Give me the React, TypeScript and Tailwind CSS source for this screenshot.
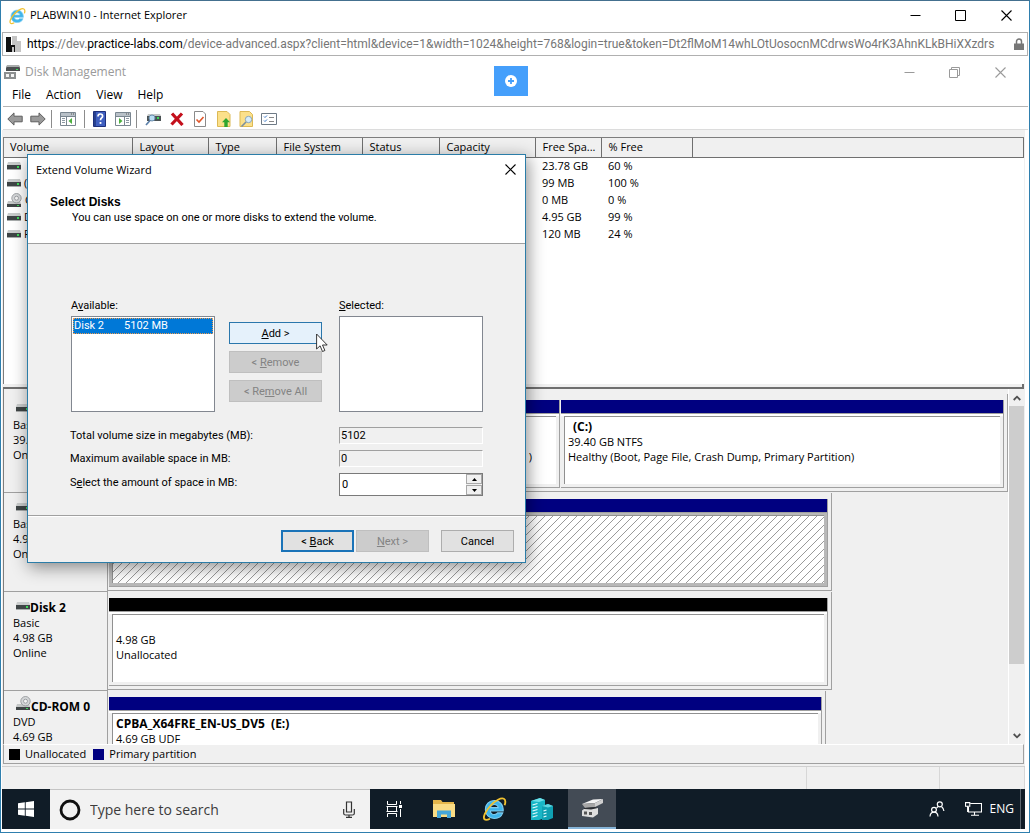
import type { ReactNode } from "react";

const ui = "font-['Open_Sans','Noto_Sans',sans-serif]";
const dlg = "font-['Roboto','Liberation_Sans',sans-serif]";

function IeIcon({ className }: { className: string }) {
  return (
    <svg viewBox="0 0 24 24" className={className} aria-hidden="true">
      <path
        d="M20.5 13.8H8.6c.2 2 1.6 3.3 3.7 3.3 1.4 0 2.4-.5 3-1.5h4.8c-1.2 3.3-4 5.1-7.8 5.1-4.9 0-8.3-3.300-8.300-8.200 0-4.900 3.400-8.300 8.300-8.300 5 0 8.400 3.600 8.200 9.600zM8.700 10.700h7.200c-.3-1.800-1.700-2.900-3.600-2.900-1.900 0-3.200 1.100-3.600 2.900z"
        fill="#3fb4ea"
        stroke="#7fcdf2"
        strokeWidth="1"
      />
      <path
        d="M21.800 8.500c1-2.800.9-5-.7-5.900-2.400-1.300-7.900 1.500-12.400 6.400C4 14.100 1.500 19.700 3.300 21.500c1 .9 2.800.6 5-.5"
        fill="none"
        stroke="#f2c230"
        strokeWidth="1.700"
      />
    </svg>
  );
}

function DriveIcon() {
  return (
    <svg viewBox="0 0 14 8" className="h-2 w-3.5 shrink-0" aria-hidden="true">
      <path d="M1 0h12l1 3H0z" fill="#c9cccc" />
      <path d="M0 3h14v4H0z" fill="#3f4546" />
      <path d="M0 7h14v1H0z" fill="#a8acac" />
      <path d="M10 4h2v2h-2z" fill="#3ddc5a" />
    </svg>
  );
}

function OpticalIcon() {
  return (
    <svg viewBox="0 0 15 15" className="h-[15px] w-[15px] shrink-0" aria-hidden="true">
      <path d="M1 8h12l1 3H0z" fill="#c3c6c6" />
      <path d="M0 11h14v3H0z" fill="#3f4546" />
      <path d="M10 12h2v1h-2z" fill="#3ddc5a" />
      <circle cx="9.500" cy="5.200" r="4.700" fill="#d4d6d8" stroke="#8d9194" strokeWidth="0.800" />
      <circle cx="9.500" cy="5.200" r="2" fill="#f5f5f5" stroke="#8d9194" strokeWidth="0.800" />
    </svg>
  );
}

function CloseGlyph({ className }: { className: string }) {
  return (
    <svg viewBox="0 0 11 11" className={className} aria-hidden="true">
      <path d="M.5.5l10 10M10.500.5l-10 10" stroke="currentColor" strokeWidth="1.100" fill="none" />
    </svg>
  );
}

function MinGlyph() {
  return (
    <svg viewBox="0 0 11 11" className="size-[11px]" aria-hidden="true">
      <path d="M.5 5.500h10" stroke="currentColor" fill="none" />
    </svg>
  );
}

function BrowserChrome() {
  return (
    <header className={ui}>
      <div className="flex h-[31px] items-center pb-0.5 pl-[7px]">
        <IeIcon className="size-[18px]" />
        <h1 className="ml-1 flex-1 text-[11px] text-black">PLABWIN10 - Internet Explorer</h1>
        <button aria-label="Minimize" className="flex h-full w-[45px] items-center justify-center">
          <MinGlyph />
        </button>
        <button aria-label="Maximize" className="flex h-full w-[45px] items-center justify-center">
          <svg viewBox="0 0 11 11" className="size-[11px]" aria-hidden="true">
            <path d="M.5.5h10v10H.5z" stroke="currentColor" fill="none" />
          </svg>
        </button>
        <button aria-label="Close" className="flex h-full w-[46px] items-center justify-center">
          <CloseGlyph className="size-[11px]" />
        </button>
      </div>
      <div className="mx-px flex h-6 items-center border border-[#b0b0b0] pl-[3px] pr-[3px]">
        <svg viewBox="0 0 16 16" className="size-4 shrink-0" aria-hidden="true">
          <path d="M6 0h5v16H6zM11 5h4v11h-4z" fill="#c4c4c4" />
          <path d="M0 1h5v15H0zM5 9h4v7H8v-5H6v5H5z" fill="#111" />
        </svg>
        <p className={`${dlg} ml-[5px] min-w-0 flex-1 whitespace-nowrap text-[12px] text-[#767676]`}>
          <span className="text-black">https</span>://dev.<span className="text-black">practice-labs.com</span>
          /device-advanced.aspx?client=html&amp;device=1&amp;width=1024&amp;height=768&amp;login=true&amp;token=Dt2flMoM14whLOtUosocnMCdrwsWo4rK3AhnKLkBHiXXzdrs
        </p>
        <svg viewBox="0 0 10 13" className="h-[13px] w-2.5 shrink-0" aria-label="Secure">
          <path d="M2.500 6V3.500a2.500 2.500 0 015 0V6" fill="none" stroke="#777" strokeWidth="1.500" />
          <path d="M0 5.500h10V12H0z" fill="#777" />
        </svg>
      </div>
    </header>
  );
}

function ToolButton({ label, className, children }: { label: string; className: string; children: ReactNode }) {
  return (
    <button aria-label={label} className={`flex h-5 shrink-0 items-center justify-center ${className}`}>
      {children}
    </button>
  );
}

function Separator() {
  return <span className="h-[18px] w-px shrink-0 bg-[#8c8c8c]" />;
}

function PanelIcon({ side }: { side: "left" | "right" }) {
  return (
    <svg viewBox="0 0 16 14" className="h-3.5 w-4" aria-hidden="true">
      <path d="M.5.5h15v13H.5z" fill="#fff" stroke="#7a8690" />
      <path d="M1 1h14v3H1z" fill="#b9c1c8" />
      <path d="M11 2h1M13 2h1" stroke="#555" />
      <path d={side === "left" ? "M6.500 4v9M1 4.500h14" : "M9.500 4v9M1 4.500h14"} stroke="#7a8690" />
      <path d={side === "left" ? "M2 6.500h3M2 8.500h3M2 10.500h3" : "M11 6.500h3M11 8.500h3M11 10.500h3"} stroke="#8d98a3" />
      <path d={side === "left" ? "M12 6v6L8.500 9z" : "M4 6v6l3.500-3z"} fill="#4caf3f" />
    </svg>
  );
}

function Toolbar() {
  return (
    <div className="flex h-[23px] items-center border-b border-[#dcdcdc] pt-0.5" role="toolbar" aria-label="Tools">
      <ToolButton label="Back" className="w-[23px]">
        <svg viewBox="0 0 16 14" className="h-3.5 w-4" aria-hidden="true">
          <path d="M.8 7L7 .9v3.300h8.200v5.600H7v3.300z" fill="#9a9a9a" stroke="#5f5f5f" />
        </svg>
      </ToolButton>
      <ToolButton label="Forward" className="w-[23px]">
        <svg viewBox="0 0 16 14" className="h-3.5 w-4" aria-hidden="true">
          <path d="M15.200 7L9 .9v3.300H.8v5.600H9v3.300z" fill="#9a9a9a" stroke="#5f5f5f" />
        </svg>
      </ToolButton>
      <span className="w-0.5" />
      <Separator />
      <ToolButton label="Show console tree" className="w-8">
        <PanelIcon side="left" />
      </ToolButton>
      <Separator />
      <ToolButton label="Help" className="w-[29px]">
        <svg viewBox="0 0 13 16" className="h-4 w-[13px]" aria-hidden="true">
          <path d="M.5.5h12v15H.5z" fill="#3f5fc0" stroke="#1d2f7c" />
          <path d="M1 1h2v14H1z" fill="#27408f" />
          <path d="M5 5.500C5 3.800 6 3 7.300 3s2.300.8 2.300 2.200C9.600 7 7.500 7 7.500 9.200" fill="none" stroke="#fff" strokeWidth="1.700" />
          <path d="M6.600 11h1.800v1.900H6.600z" fill="#fff" />
        </svg>
      </ToolButton>
      <ToolButton label="Show action pane" className="w-[18px]">
        <PanelIcon side="right" />
      </ToolButton>
      <span className="w-1" />
      <Separator />
      <ToolButton label="Rescan disks" className="w-[31px]">
        <svg viewBox="0 0 16 13" className="h-[13px] w-4" aria-hidden="true">
          <path d="M3 1h12l1 2H2z" fill="#c5c8c8" />
          <path d="M2 3h14v5H2z" fill="#4a5254" />
          <path d="M12 4h2v2h-2z" fill="#3ddc5a" />
          <circle cx="7" cy="5" r="3" fill="#b9ddf3" stroke="#6b8fb0" />
          <path d="M5 7.500L1 12" stroke="#5b7fa8" strokeWidth="1.700" />
        </svg>
      </ToolButton>
      <ToolButton label="Delete" className="w-[17px]">
        <svg viewBox="0 0 14 14" className="size-3.5" aria-hidden="true">
          <path d="M2 1.500l10.500 11.500M12 1.500L1.500 12.500" stroke="#c4101c" strokeWidth="3.200" />
        </svg>
      </ToolButton>
      <ToolButton label="Properties" className="w-[29px]">
        <svg viewBox="0 0 12 16" className="h-4 w-3" aria-hidden="true">
          <path d="M.5.5H9L11.500 3v12.500H.5z" fill="#fff" stroke="#8a8a8a" />
          <path d="M2.500 8.500L5 11l4.500-5" fill="none" stroke="#e0562a" strokeWidth="1.600" />
        </svg>
      </ToolButton>
      <ToolButton label="Export list" className="w-[19px]">
        <svg viewBox="0 0 14 16" className="h-4 w-3.5" aria-hidden="true">
          <path d="M.5.5H10l3 3v12H.5z" fill="#fbe08a" stroke="#dcb955" />
          <path d="M9 7l4 4.200h-2.300V16H7.300v-4.800H5z" fill="#2fa52f" />
        </svg>
      </ToolButton>
      <ToolButton label="Find" className="w-[27px]">
        <svg viewBox="0 0 15 16" className="h-4 w-[15px]" aria-hidden="true">
          <path d="M1 .5h9.500l3 3v12H1z" fill="#fbe08a" stroke="#dcb955" />
          <circle cx="9.500" cy="8.500" r="3.200" fill="#d5ecfa" stroke="#8ba5b8" />
          <path d="M7 11l-4.500 4.500" stroke="#7a8fa0" strokeWidth="1.600" />
        </svg>
      </ToolButton>
      <ToolButton label="Settings" className="w-[18px]">
        <svg viewBox="0 0 16 12" className="h-3 w-4" aria-hidden="true">
          <path d="M.5.5h15v11H.5z" fill="#fff" stroke="#6e7a86" />
          <path d="M3 3.500l1 1 2-2M3 7.500l1 1 2-2" fill="none" stroke="#3a78c8" />
          <path d="M8 4.500h5M8 8.500h5" stroke="#888" />
        </svg>
      </ToolButton>
    </div>
  );
}

function AppHeader() {
  return (
    <div className={`${ui} border-l border-white`}>
      <div className="flex h-[30px] items-center pl-px pt-0.5 text-[#9a9a9a]">
        <svg viewBox="0 0 16 14" className="h-3.5 w-4" aria-hidden="true">
          <path d="M3 1h12l1 2v3H2V3z" fill="#4c4f50" />
          <path d="M3 0h12l1 2H2z" fill="#a9acac" />
          <path d="M12 4h2v1h-2z" fill="#3ddc5a" />
          <path d="M0 7h12v7H0z" fill="#8c8f90" />
          <path d="M2 9h3v3H2zM7 9h3v3H7z" fill="#f4f4f4" />
        </svg>
        <h2 className="ml-[5px] flex-1 text-[12px] leading-4">Disk Management</h2>
        <button aria-label="Minimize window" className="flex h-full w-[45px] items-center justify-center">
          <MinGlyph />
        </button>
        <button aria-label="Restore window" className="flex h-full w-[45px] items-center justify-center">
          <svg viewBox="0 0 11 11" className="size-[11px]" aria-hidden="true">
            <path d="M.5 2.500h8v8h-8zM2.500 2.500v-2h8v8h-2" stroke="currentColor" fill="none" />
          </svg>
        </button>
        <button aria-label="Close window" className="mr-[5px] flex h-full w-[46px] items-center justify-center">
          <CloseGlyph className="size-[11px]" />
        </button>
      </div>
      <nav className="flex h-[21px] items-center gap-[15px] border-b border-[#b4b4b4] pb-0.5 pl-[9px] text-[12px] text-black">
        <button>File</button>
        <button>Action</button>
        <button>View</button>
        <button>Help</button>
      </nav>
      <Toolbar />
    </div>
  );
}

const volumes = [
  { name: "", free: "23.78 GB", percent: "60 %" },
  { name: "(", free: "99 MB", percent: "100 %" },
  { name: "C", free: "0 MB", percent: "0 %", optical: true },
  { name: "D", free: "4.95 GB", percent: "99 %" },
  { name: "F", free: "120 MB", percent: "24 %" },
];
const columns = ["Volume", "Layout", "Type", "File System", "Status", "Capacity", "Free Spa...", "% Free", ""];

function VolumeTable() {
  return (
    <section className="h-[247px] overflow-hidden border-l border-t border-[#7d7d7d] bg-white">
      <table className="w-full table-fixed border-collapse text-left text-[11px] leading-4 text-black">
        <colgroup>
          <col className="w-[128px]" />
          <col className="w-[76px]" />
          <col className="w-[68px]" />
          <col className="w-[86px]" />
          <col className="w-[77px]" />
          <col className="w-[96px]" />
          <col className="w-[66px]" />
          <col className="w-[91px]" />
          <col />
        </colgroup>
        <thead>
          <tr className="h-[19px] bg-[#f0f0f0]">
            {columns.map((c, i) => (
              <th
                key={i}
                scope="col"
                className="whitespace-nowrap border-b border-r border-[#6f6f6f] py-0 pl-[7px] pr-0 font-normal first:pl-1.5"
              >
                {c}
              </th>
            ))}
          </tr>
        </thead>
        <tbody>
          {volumes.map((v, i) => (
            <tr key={i} className="h-[17px]">
              <td className="p-0">
                <div className="flex h-[17px] items-center gap-[3px] pl-[3px]">
                  {v.optical ? <OpticalIcon /> : <DriveIcon />}
                  {v.name}
                </div>
              </td>
              <td colSpan={5} className="p-0" />
              <td className="whitespace-nowrap py-0 pl-[7px] pr-0">{v.free}</td>
              <td className="whitespace-nowrap py-0 pl-[7px] pr-0">{v.percent}</td>
              <td className="p-0" />
            </tr>
          ))}
        </tbody>
      </table>
    </section>
  );
}

function Partition({ bar, className, hatched, children }: { bar: string; className: string; hatched?: boolean; children?: ReactNode }) {
  return (
    <div className={`flex min-w-0 flex-col border-b border-r border-[#a0a0a0] ${hatched ? "bg-[#b8b8b8]" : "bg-[#f0f0f0]"} ${className}`}>
      <div className={`h-[13px] shrink-0 ${bar}`} />
      <div className={`h-[3px] border-t border-[#a0a0a0] ${hatched ? "" : "bg-white"}`} />
      <div
        className={`mx-[3px] mb-[3px] flex flex-1 flex-col overflow-hidden border-l border-t border-[#909090] pl-[3px] pt-0.5 leading-[15px] ${
          hatched
            ? "bg-[#ffffff] bg-[linear-gradient(135deg,transparent_45%,#9a9a9a_45%,#9a9a9a_55%,transparent_55%)] bg-[length:8px_8px]"
            : "bg-white"
        }`}
      >
        {children}
      </div>
    </div>
  );
}

function DiskRow({ name, optical, lines, graph, children }: { name: string; optical?: boolean; lines: string[]; graph: string; children: ReactNode }) {
  return (
    <div className="flex h-[99px] shrink-0">
      <div className="w-[104px] shrink-0 border-b border-r border-[#a0a0a0] pl-[9px] pt-[5px] leading-[15px]">
        <div className="flex h-[18px] items-end whitespace-nowrap pl-[3px] text-[12px] font-bold">
          <span className={optical ? "self-start" : "self-center"}>{optical ? <OpticalIcon /> : <DriveIcon />}</span>
          {name}
        </div>
        {lines.map((l) => (
          <p key={l}>{l}</p>
        ))}
      </div>
      <div className="flex min-w-0 flex-1 pb-px">
        <div className={`flex gap-px border-b border-r border-[#a0a0a0] pb-[3px] pl-px pr-[3px] pt-1.5 ${graph}`}>{children}</div>
      </div>
    </div>
  );
}

function DiskGraph() {
  return (
    <section className="flex h-[355px]">
      <div className="min-w-0 flex-1 overflow-hidden border-l border-[#7d7d7d] pt-[5px] text-[11px] text-black">
        <DiskRow name="" lines={["Basic", "39.", "Online"]} graph="w-full">
          <Partition bar="bg-[#000080]" className="flex-[451]">
            <p className="mt-[30px] pr-6 text-right">)</p>
          </Partition>
          <Partition bar="bg-[#000080]" className="flex-[443]">
            <p className="pl-[5px] text-[12px] font-bold leading-[15px]">(C:)</p>
            <p>39.40 GB NTFS</p>
            <p>Healthy (Boot, Page File, Crash Dump, Primary Partition)</p>
          </Partition>
        </DiskRow>
        <DiskRow name="" lines={["Basic", "4.98 GB", "Online"]} graph="w-[80.400%]">
          <Partition bar="bg-[#000080]" className="flex-1" hatched />
        </DiskRow>
        <DiskRow name="Disk 2" lines={["Basic", "4.98 GB", "Online"]} graph="w-[80.400%]">
          <Partition bar="bg-black" className="flex-1">
            <p className="mt-[15px]">4.98 GB</p>
            <p>Unallocated</p>
          </Partition>
        </DiskRow>
        <DiskRow name="CD-ROM 0" optical lines={["DVD", "4.69 GB"]} graph="w-[79.800%]">
          <Partition bar="bg-[#000080]" className="flex-1">
            <p className="text-[12px] font-bold leading-[15px]">CPBA_X64FRE_EN-US_DV5&nbsp; (E:)</p>
            <p>4.69 GB UDF</p>
          </Partition>
        </DiskRow>
      </div>
      <div className="flex w-4 flex-col items-center border-l border-white">
        <button aria-label="Scroll up" className="flex h-[17px] w-full items-center justify-center">
          <svg viewBox="0 0 8 6" className="h-1.5 w-2" aria-hidden="true">
            <path d="M.7 5L4 1.700 7.300 5" fill="none" stroke="#505050" strokeWidth="1.800" />
          </svg>
        </button>
        <div className="h-[258px] w-[15px] bg-[#cdcdcd]" />
        <span className="flex-1" />
        <button aria-label="Scroll down" className="flex h-[17px] w-full items-center justify-center">
          <svg viewBox="0 0 8 6" className="h-1.5 w-2" aria-hidden="true">
            <path d="M.7 1L4 4.300 7.300 1" fill="none" stroke="#505050" strokeWidth="1.800" />
          </svg>
        </button>
      </div>
    </section>
  );
}

const dialogButton = "flex h-[22px] items-center justify-center text-[11px]";
const disabledButton = "border border-[#bfbfbf] bg-[#cccccc] text-[#838383]";
const readout = "h-[17px] border border-b-white border-l-[#a0a0a0] border-r-white border-t-[#a0a0a0] pl-px";

function ExtendVolumeWizard() {
  return (
    <div
      role="dialog"
      aria-labelledby="wizard-title"
      className={`${dlg} absolute left-[26px] top-[153px] flex h-[409px] w-[499px] flex-col border border-[#2b7da8] bg-[#f0f0f0] text-[11px] leading-[15px] text-black shadow-[2px_4px_16px_rgba(0,0,0,0.45)]`}
    >
      <div className="h-[89px] border-b border-[#a0a0a0] bg-white">
        <div className="flex h-7 items-center justify-between pl-2 pr-[9px]">
          <h2 id="wizard-title" className={`${ui} text-[11px]`}>
            Extend Volume Wizard
          </h2>
          <button aria-label="Close wizard">
            <CloseGlyph className="size-[11px]" />
          </button>
        </div>
        <h3 className="pl-[22px] pt-3 font-['Liberation_Sans',Arial,sans-serif] text-[12px] font-bold leading-[15px]">Select Disks</h3>
        <p className="pl-11">You can use space on one or more disks to extend the volume.</p>
      </div>
      <div className="flex flex-1 flex-col border-b border-[#a0a0a0] pl-[43px] pt-[54px]">
        <div className="flex">
          <div className="w-36">
            <p id="available" className="h-[18px]">
              A<u>v</u>ailable:
            </p>
            <ul role="listbox" aria-labelledby="available" className="h-24 border border-[#828790] bg-white p-px">
              <li role="option" aria-selected="true" className="flex h-4 gap-5 border border-dotted border-[#e89a50] bg-[#0078d7] leading-[14px] text-white">
                <span>Disk 2</span>
                <span>5102 MB</span>
              </li>
            </ul>
          </div>
          <div className="ml-3.5 mt-6 flex w-[93px] flex-col gap-[7px]">
            <button className={`${dialogButton} border border-[#2a77ac] bg-[#e5f1fb]`}>
              <u>A</u>dd &gt;
            </button>
            <button disabled className={`${dialogButton} ${disabledButton}`}>
              &lt;&nbsp;<u>R</u>emove
            </button>
            <button disabled className={`${dialogButton} ${disabledButton}`}>
              &lt;&nbsp;Re<u>m</u>ove All
            </button>
          </div>
          <div className="ml-[17px] w-36">
            <p id="selected" className="h-[18px]">
              <u>S</u>elected:
            </p>
            <ul role="listbox" aria-labelledby="selected" className="h-24 border border-[#828790] bg-white" />
          </div>
        </div>
        <div className="-ml-px mt-[15px] grid grid-cols-[269px_144px] items-center gap-y-1.5">
          <label htmlFor="total">Total volume size in megabytes (MB):</label>
          <input id="total" readOnly value="5102" className={readout} />
          <label htmlFor="maximum">Maximum available space in MB:</label>
          <input id="maximum" readOnly value="0" className={readout} />
          <label htmlFor="amount" className="pb-1">
            S<u>e</u>lect the amount of space in MB:
          </label>
          <div className="flex h-[23px] border border-[#7a7a7a] bg-white">
            <input id="amount" defaultValue="0" className="min-w-0 flex-1 pl-0.5" />
            <div className="flex w-4 flex-col gap-px bg-[#f0f0f0]">
              <button aria-label="Increase" className="flex flex-1 items-center justify-center border border-[#a8a8a8]">
                <svg viewBox="0 0 5 3" className="h-[3px] w-[5px]" aria-hidden="true">
                  <path d="M0 3L2.500 0 5 3z" />
                </svg>
              </button>
              <button aria-label="Decrease" className="flex flex-1 items-center justify-center border border-[#a8a8a8]">
                <svg viewBox="0 0 5 3" className="h-[3px] w-[5px]" aria-hidden="true">
                  <path d="M0 0l2.500 3L5 0z" />
                </svg>
              </button>
            </div>
          </div>
        </div>
      </div>
      <div className="flex h-[46px] items-start justify-end border-t border-white pr-[11px] pt-[13px]">
        <button className={`${dialogButton} w-[73px] border-2 border-[#1a73b8] bg-[#e1e1e1]`}>
          &lt;&nbsp;<u>B</u>ack
        </button>
        <button disabled className={`${dialogButton} ${disabledButton} ml-0.5 w-[73px]`}>
          <u>N</u>ext&nbsp;&gt;
        </button>
        <button className={`${dialogButton} ml-3 w-[73px] border border-[#adadad] bg-[#e1e1e1]`}>Cancel</button>
      </div>
    </div>
  );
}

function Taskbar() {
  const item = "flex h-full w-12 items-center justify-center";
  return (
    <footer className={`${ui} mr-[3px] flex h-10 shrink-0 items-center bg-[#101c27] text-white`}>
      <button aria-label="Start" className={item}>
        <svg viewBox="0 0 16 16" className="size-4" aria-hidden="true">
          <path d="M0 2.300L6.800 1.300v6.200H0zM7.700 1.200L16 0v7.500H7.700zM0 8.400h6.800v6.300L0 13.700zM7.700 8.400H16V16l-8.300-1.200z" fill="#fff" />
        </svg>
      </button>
      <div className="flex h-full w-80 items-center border-t border-[#c4c4c4] bg-[#f2f2f2] pl-[9px] pr-[15px] text-[#3c3c3c]">
        <svg viewBox="0 0 22 22" className="size-[22px]" aria-hidden="true">
          <circle cx="11" cy="11" r="9" fill="none" stroke="#111" strokeWidth="2.800" />
        </svg>
        <input aria-label="Search" placeholder="Type here to search" className="ml-[9px] min-w-0 flex-1 text-[14px] placeholder:text-[#3c3c3c]" />
        <svg viewBox="0 0 12 17" className="h-[17px] w-3" aria-hidden="true">
          <path d="M3.500 1h5v10h-5zM.7 8v4.500c0 1 .8 1.500 1.800 1.500h7c1 0 1.800-.5 1.800-1.500V8M6 14v2.500M3 16.300h6" fill="none" stroke="#333" strokeWidth="1.200" />
        </svg>
      </div>
      <button aria-label="Task view" className={item}>
        <svg viewBox="0 0 17 16" className="h-4 w-[17px]" aria-hidden="true">
          <path d="M1.500 0v3.500h9V0M1.500 16v-3.500h9V16M1.500 5.500h9v5h-9zM.5 5.500h11M.5 10.500h11M14.500 0v3M14.500 8v8" fill="none" stroke="#fff" />
          <path d="M13 4h3v3h-3z" fill="#fff" />
        </svg>
      </button>
      <button aria-label="File Explorer" className={`${item} ml-0.5`}>
        <svg viewBox="0 0 22 18" className="h-[18px] w-[22px]" aria-hidden="true">
          <path d="M0 0h8l1.500 2H21v3H0z" fill="#e5b64b" />
          <path d="M0 4h22v13H0z" fill="#fadc85" />
          <path d="M4 18v-7.500h14V18h-4v-3.500H8V18z" fill="#46a6d8" />
        </svg>
      </button>
      <button aria-label="Internet Explorer" className={`${item} ml-0.5`}>
        <IeIcon className="size-[26px]" />
      </button>
      <button aria-label="Server Manager" className={item}>
        <svg viewBox="0 0 22 22" className="size-[22px]" aria-hidden="true">
          <path d="M0 3l9-3 5 2v18l-6 2H0z" fill="#18b6c6" />
          <path d="M0 3l9-3 5 2-6 2z" fill="#6ce0ea" />
          <path d="M11 8l6-2 5 2v12l-5 2h-6z" fill="#0fa0b2" />
          <path d="M11 8l6-2 5 2-5 1.500z" fill="#5fd5e0" />
          <path d="M1.500 7l5-1.500M1.500 10l5-1.500M1.500 13l5-1.500M1.500 16l5-1.500M1.500 19l5-1.500M12.500 13l3-1M12.500 16l3-1M12.500 19l3-1" stroke="#e3fbfd" strokeWidth="1.300" />
        </svg>
      </button>
      <button aria-label="Disk Management" className={`${item} ml-0.5 border-b-2 border-[#86b4d8] bg-[#434b55]`}>
        <svg viewBox="0 0 22 20" className="h-5 w-[22px]" aria-hidden="true">
          <path d="M1 6L12 1.500 22 1 14 5z" fill="#f4f4f4" />
          <path d="M1 6l13-1v4L4 10z" fill="#a6a6a6" />
          <path d="M14 5l8-4v4l-8 4z" fill="#cfcfcf" />
          <path d="M3 10l11-1 2 1-2 2-11-.5z" fill="#2c2f33" />
          <path d="M1 12.500l2-1.500 7 .5 7-1.500v6l-5 3.500-11-1.500z" fill="#dedede" />
          <path d="M3 13.500h3v3H3zM8 14h3v3H8z" fill="#555" />
        </svg>
      </button>
      <span className="flex-1" />
      <button aria-label="People" className="mr-5">
        <svg viewBox="0 0 16 16" className="size-4" aria-hidden="true">
          <circle cx="10.800" cy="3.300" r="2.500" fill="none" stroke="#fff" strokeWidth="1.200" />
          <path d="M9 5.500c-.5.600-1 1-1.300 1.500M12.500 5.500c1.500 1.300 2.300 2.700 2.400 4.500" fill="none" stroke="#fff" strokeWidth="1.200" />
          <circle cx="5" cy="8.800" r="2.400" fill="none" stroke="#fff" strokeWidth="1.200" />
          <path d="M1 15.500c.2-2.500 1.700-4.300 4-4.300s3.800 1.800 4 4.300" fill="none" stroke="#fff" strokeWidth="1.200" />
        </svg>
      </button>
      <button aria-label="Network" className="mr-2">
        <svg viewBox="0 0 17 14" className="h-3.5 w-[17px]" aria-hidden="true">
          <path d="M5.500 1.500h11v8.500H3.500V5M.5.600h4.300v3.600H.5zM2.600 4v6M9.500 10v3M6 13.300h8" fill="none" stroke="#fff" strokeWidth="1.100" />
        </svg>
      </button>
      <span className="mr-1.5 text-[12px]">ENG</span>
      <span className="mr-1 h-full w-px bg-[#5c6670]" />
    </footer>
  );
}

export default function App() {
  return (
    <div className="relative flex min-h-screen flex-col overflow-hidden border border-[#2f7fae] border-t-[#44708f] bg-white">
      <BrowserChrome />
      <main className="flex flex-1 flex-col px-px">
        <AppHeader />
        <div className={`${ui} mr-[3px] flex flex-1 flex-col bg-[#f0f0f0]`}>
          <div className="ml-px mr-px mt-[7px]">
            <VolumeTable />
            <div className="h-[5px] border-b-2 border-r-2 border-[#6f6f6f] bg-[#f0f0f0]" />
            <DiskGraph />
            <div className="flex h-5 items-center border border-[#a0a0a0] border-t-white pl-[5px] text-[11px] text-black">
              <span className="size-[11px] bg-black" />
              <span className="ml-[5px]">Unallocated</span>
              <span className="ml-[7px] size-[11px] bg-[#000080]" />
              <span className="ml-[5px]">Primary partition</span>
            </div>
          </div>
          <div className="mt-0.5 flex min-h-[22px] flex-1 justify-end border-t border-[#d0d0d0]">
            <span className="w-[133px] border-l border-[#d7d7d7]" />
            <span className="w-[86px] border-l border-r border-[#d7d7d7]" />
          </div>
        </div>
        <div className="mb-[3px]">
          <Taskbar />
        </div>
      </main>
      <button aria-label="Open panel" className="absolute left-1/2 top-[65px] -ml-[21px] flex h-[30px] w-[34px] items-center justify-center bg-[#459ffb]">
        <svg viewBox="0 0 12 12" className="size-3" aria-hidden="true">
          <circle cx="6" cy="6" r="6" fill="#fff" />
          <path d="M6 3v6M3 6h6" stroke="#459ffb" strokeWidth="1.800" />
        </svg>
      </button>
      <ExtendVolumeWizard />
      <svg viewBox="0 0 12 20" className="pointer-events-none absolute left-[315px] top-[332px] h-5 w-3" aria-hidden="true">
        <path d="M.6 1v15l3.500-3.200L6.500 18.500l2.400-1L6.500 12h4.700z" fill="#fff" stroke="#222" strokeWidth="0.900" />
      </svg>
    </div>
  );
}
